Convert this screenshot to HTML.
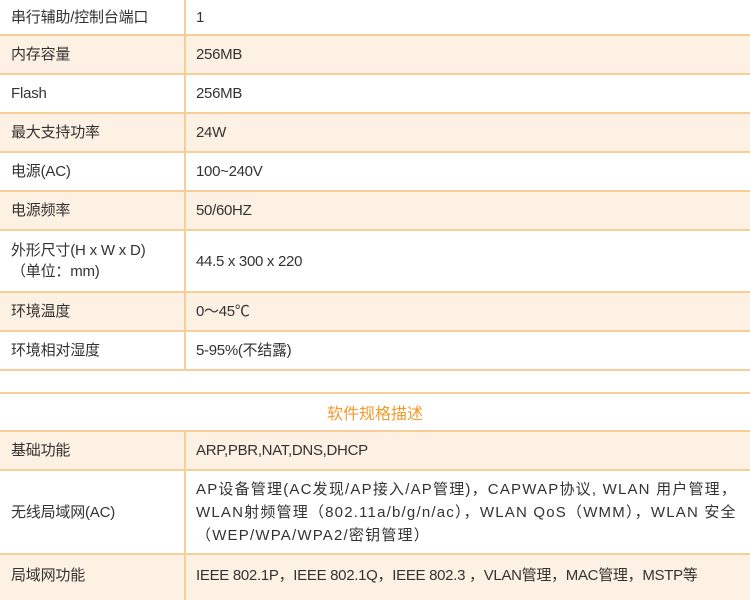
<!DOCTYPE html>
<html><head><meta charset="utf-8"><style>
body{margin:0;width:750px;height:580px;overflow:hidden;background:#fff;font-family:"Liberation Sans","Noto Sans CJK SC",sans-serif;font-size:15px;color:#333;position:relative}
.r{position:absolute;left:0;width:750px;border-bottom:2px solid #f9cd98;box-sizing:border-box}
.b{background:#fdf1e3}
.l{position:absolute;left:11px;top:0;bottom:0;display:flex;align-items:center;line-height:21px;letter-spacing:-0.2px}
.v{position:absolute;left:196px;top:0;bottom:0;display:flex;align-items:center;line-height:23px;right:4px;letter-spacing:-0.3px;white-space:nowrap}
.c{position:absolute;left:184px;top:0;bottom:0;width:2px;background:#f9cd98}
.h{color:#f39a2c;font-size:16px;text-align:center;display:flex;align-items:center;justify-content:center}
</style></head><body>
<div class="r" style="top:0;height:36px"><div class="l">串行辅助/控制台端口</div><div class="c"></div><div class="v">1</div></div>
<div class="r b" style="top:36px;height:39px"><div class="l">内存容量</div><div class="c"></div><div class="v">256MB</div></div>
<div class="r" style="top:75px;height:39px"><div class="l">Flash</div><div class="c"></div><div class="v">256MB</div></div>
<div class="r b" style="top:114px;height:39px"><div class="l">最大支持功率</div><div class="c"></div><div class="v">24W</div></div>
<div class="r" style="top:153px;height:39px"><div class="l">电源(AC)</div><div class="c"></div><div class="v">100~240V</div></div>
<div class="r b" style="top:192px;height:39px"><div class="l">电源频率</div><div class="c"></div><div class="v">50/60HZ</div></div>
<div class="r" style="top:231px;height:62px"><div class="l">外形尺寸(H x W x D)<br>（单位：mm)</div><div class="c"></div><div class="v">44.5 x 300 x 220</div></div>
<div class="r b" style="top:293px;height:39px"><div class="l">环境温度</div><div class="c"></div><div class="v">0～45℃</div></div>
<div class="r" style="top:332px;height:39px"><div class="l">环境相对湿度</div><div class="c"></div><div class="v">5-95%(不结露)</div></div>
<div class="r" style="top:371px;height:23px"></div>
<div class="r h" style="top:394px;height:38px">软件规格描述</div>
<div class="r b" style="top:432px;height:39px"><div class="l">基础功能</div><div class="c"></div><div class="v">ARP,PBR,NAT,DNS,DHCP</div></div>
<div class="r" style="top:471px;height:84px"><div class="l">无线局域网(AC)</div><div class="c"></div><div class="v" style="letter-spacing:1.2px">AP设备管理(AC发现/AP接入/AP管理)，CAPWAP协议, WLAN 用户管理，<br>WLAN射频管理（802.11a/b/g/n/ac），WLAN QoS（WMM），WLAN 安全<br>（WEP/WPA/WPA2/密钥管理）</div></div>
<div class="r b" style="top:555px;height:45px;border:none"><div class="l" style="top:-4px">局域网功能</div><div class="c"></div><div class="v" style="top:-4px">IEEE 802.1P，IEEE 802.1Q，IEEE 802.3 ，VLAN管理，MAC管理，MSTP等</div></div>
</body></html>
